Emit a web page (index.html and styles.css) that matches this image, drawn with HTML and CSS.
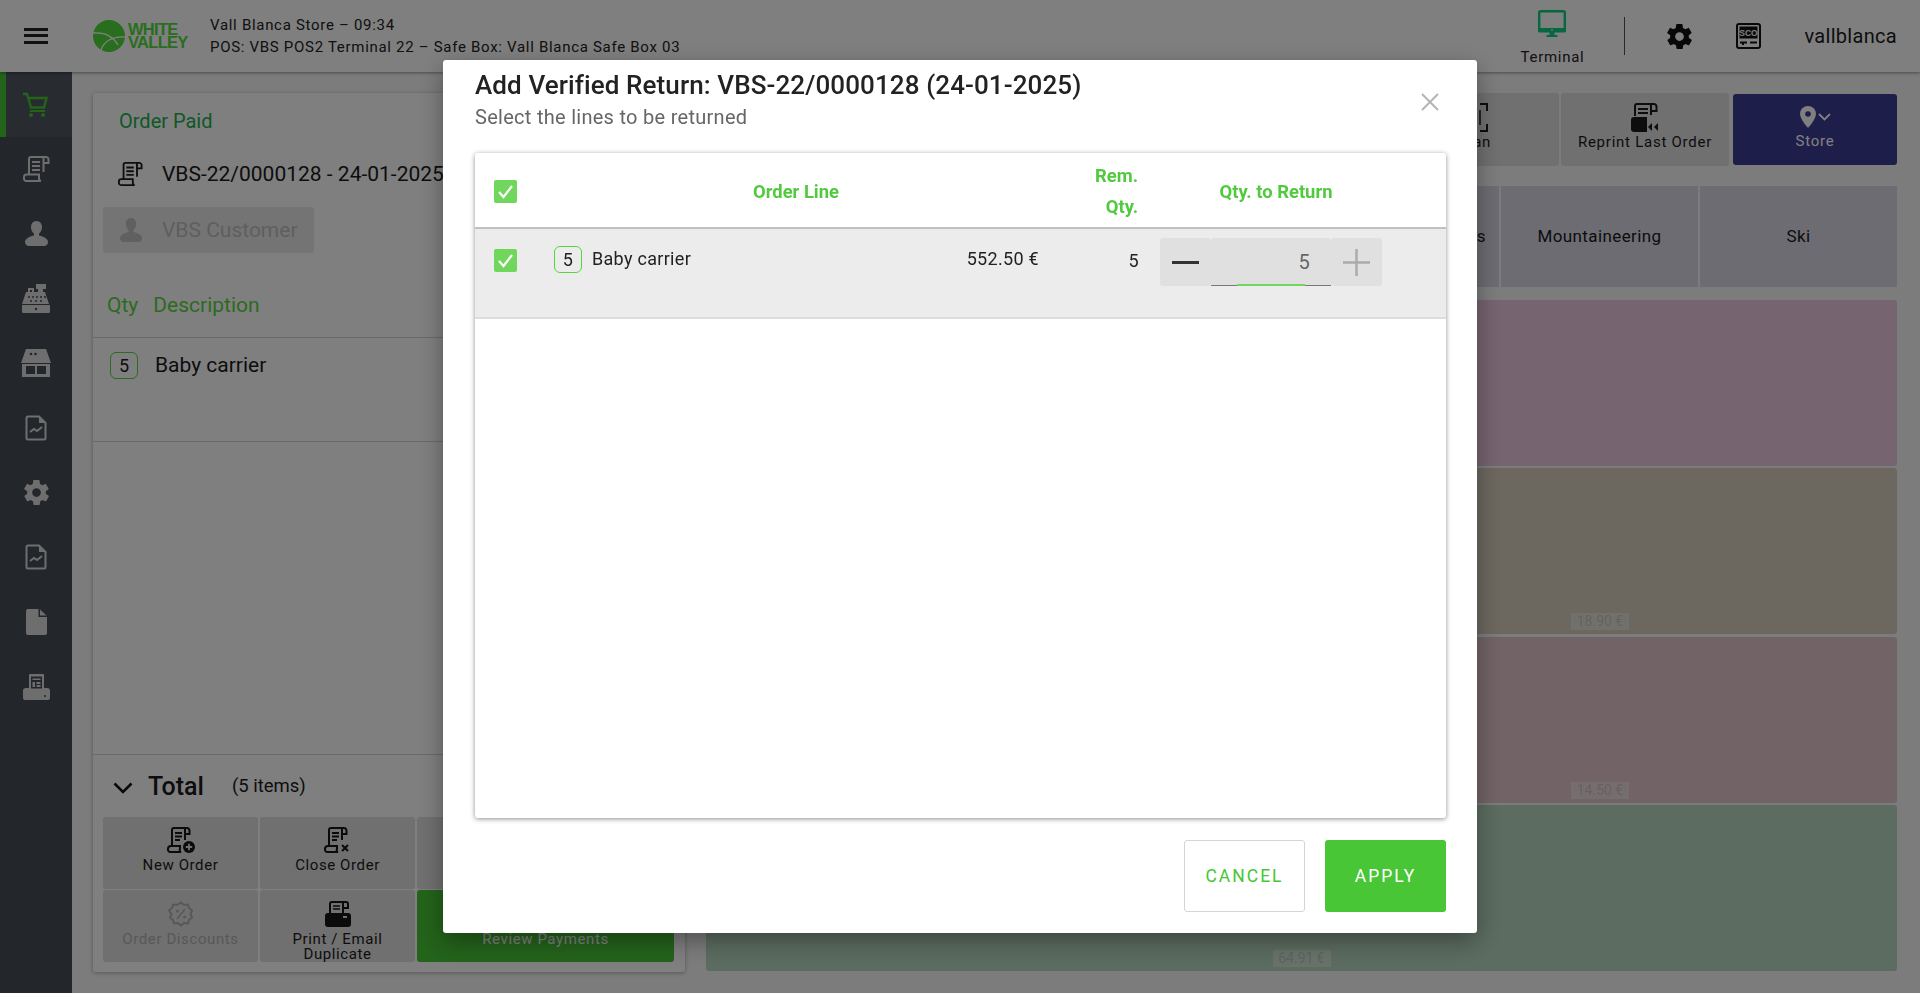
FILE: index.html
```html
<!DOCTYPE html>
<html lang="en">
<head>
<meta charset="utf-8">
<title>POS</title>
<link rel="stylesheet" href="styles.css">
</head>
<body>
<div class="app">
  <header class="topbar">
    <button class="burger"><span></span><span></span><span></span></button>
    <div class="logo">
      <svg width="32" height="32" viewBox="0 0 32 32"><circle cx="16" cy="16" r="16" fill="#52dc3c"/><path d="M0 13c11-1 20 3 25 12M8 30c3-9 12-14 24-13" fill="none" stroke="#fff" stroke-width="1.300"/></svg>
      <div class="logo-text">WHITE<br>VALLEY</div>
    </div>
    <div class="store-info">
      <div>Vall Blanca Store – 09:34</div>
      <div>POS: VBS POS2 Terminal 22 – Safe Box: Vall Blanca Safe Box 03</div>
    </div>
    <div class="top-right">
      <div class="terminal">
        <svg width="28" height="27" viewBox="0 0 28 27"><rect x="1.200" y="1.200" width="25.600" height="19.600" rx="1.500" fill="none" stroke="#0bd080" stroke-width="2.400"/><path d="M0 18h28v3a1.500 1.500 0 0 1-1.500 1.500h-25A1.500 1.500 0 0 1 0 21zM11.500 22.500h5V25h3v2h-11v-2h3z" fill="#0bd080"/><path d="M13 19.500h2v1h-2z" fill="#fff"/></svg>
        <span>Terminal</span>
      </div>
      <div class="vsep"></div>
      <svg class="gear" width="25" height="25" viewBox="2 2 20 20"><path fill="#111" d="M19.400 13c0-.3.1-.6.1-1s0-.7-.1-1l2.100-1.600c.2-.2.2-.4.1-.6l-2-3.500c-.1-.2-.4-.3-.6-.2l-2.500 1c-.5-.4-1.100-.7-1.700-1l-.4-2.700c0-.2-.2-.4-.5-.4h-4c-.3 0-.5.2-.5.4l-.4 2.700c-.6.2-1.100.6-1.700 1l-2.500-1c-.2-.1-.5 0-.6.2l-2 3.500c-.1.2-.1.5.1.6L4.600 11c0 .3-.1.6-.1 1s0 .7.1 1l-2.100 1.600c-.2.2-.2.4-.1.6l2 3.500c.1.2.4.3.6.2l2.500-1c.5.4 1.100.7 1.700 1l.4 2.700c0 .2.2.4.5.4h4c.3 0 .5-.2.5-.4l.4-2.700c.6-.2 1.100-.6 1.700-1l2.500 1c.2.1.5 0 .6-.2l2-3.500c.1-.2.1-.5-.1-.6zM12 15.500a3.500 3.500 0 1 1 0-7 3.500 3.500 0 0 1 0 7z"/></svg>
      <svg class="sco" width="25" height="26" viewBox="0 0 25 26"><rect x="1" y="1" width="23" height="24" rx="2" fill="none" stroke="#111" stroke-width="2"/><rect x="3.500" y="3.500" width="18" height="12" fill="#111"/><text class="sco-text" x="12.500" y="13" text-anchor="middle">SCO</text><path d="M4 18.500h7v2H8v1.500H6v-1.500H4zM14 18.500h7v2h-7z" fill="#111"/></svg>
      <div class="username">vallblanca</div>
    </div>
  </header>
  <div class="body-row">
    <nav class="sidebar">
      <div class="nav-item active">
        <svg width="26" height="25" viewBox="0 0 26 25"><path d="M1 2h4l4 13.500h13l2.500-9.500H6" fill="none" stroke="#48c635" stroke-width="2.400"/><path d="M8 19h15" stroke="#48c635" stroke-width="2"/><circle cx="9" cy="23" r="2" fill="#48c635"/><circle cx="21" cy="23" r="2" fill="#48c635"/></svg>
      </div>
      <div class="nav-item"><svg width="27" height="26" viewBox="0 0 27 26"><path d="M6 18V3a2 2 0 0 1 2-2h15a2.500 2.500 0 0 1 2.500 2.500V7H21M20.500 1v15M1 21a2.500 2.500 0 0 1 2.500-2.500H16V22a2.500 2.500 0 0 0 2 3H3.500A2.500 2.500 0 0 1 1 22z" fill="none" stroke="#dcdcdc" stroke-width="2"/><path d="M9 6h8M9 10h8M9 14h8" stroke="#dcdcdc" stroke-width="2"/></svg></div>
      <div class="nav-item"><svg width="23" height="25" viewBox="0 0 23 25"><path fill="#dcdcdc" d="M11.500 0c3.500 0 5.500 2.800 5.500 6.300 0 2.700-1.500 5-3 6.500v1.700c3 .8 9 2.500 9 6.500 0 2.500-2 4-4 4H4c-2 0-4-1.500-4-4 0-4 6-5.700 9-6.500v-1.700C7.500 11.300 6 9 6 6.300 6 2.800 8 0 11.500 0z"/></svg></div>
      <div class="nav-item"><svg width="30" height="30" viewBox="0 0 30 30"><path fill="#dcdcdc" d="M5 9h2V5h6v4h4V6h-2V1h10v5h-3v3h2l4 12H1zM1 22h28v6.500a1.500 1.500 0 0 1-1.500 1.500h-25A1.500 1.500 0 0 1 1 28.500z"/><g fill="#474f57"><rect x="9" y="7" width="2" height="2"/><circle cx="8" cy="14" r="1"/><circle cx="12" cy="14" r="1"/><circle cx="16" cy="14" r="1"/><circle cx="20" cy="14" r="1"/><circle cx="24" cy="14" r="1"/><circle cx="10" cy="18" r="1"/><circle cx="15" cy="18" r="1"/><circle cx="20" cy="18" r="1"/><circle cx="15" cy="26" r="1.200"/></g></svg></div>
      <div class="nav-item"><svg width="30" height="28" viewBox="0 0 30 28"><path fill="#dcdcdc" d="M5 0h20l5 14H0z"/><path fill="#dcdcdc" d="M1 15h28v13H1z"/><rect x="5" y="17" width="20" height="8" fill="#474f57"/><rect x="14" y="17" width="2" height="11" fill="#dcdcdc"/><circle cx="10" cy="5" r="1.300" fill="#474f57"/><circle cx="14.500" cy="5" r="1.300" fill="#474f57"/></svg></div>
      <div class="nav-item"><svg width="22" height="26" viewBox="0 0 22 26"><path d="M3 1.500h11l6.500 6.500v15a1.500 1.500 0 0 1-1.500 1.500H3A1.500 1.500 0 0 1 1.500 23V3A1.500 1.500 0 0 1 3 1.500z" fill="none" stroke="#dcdcdc" stroke-width="2"/><path d="M5 17l4-3 3 2 5-4" fill="none" stroke="#dcdcdc" stroke-width="2"/><path d="M14 2v6h6z" fill="#dcdcdc"/></svg></div>
      <div class="nav-item"><svg width="25" height="25" viewBox="2 2 20 20"><path fill="#dcdcdc" d="M19.400 13c0-.3.1-.6.1-1s0-.7-.1-1l2.100-1.600c.2-.2.2-.4.1-.6l-2-3.500c-.1-.2-.4-.3-.6-.2l-2.500 1c-.5-.4-1.100-.7-1.700-1l-.4-2.700c0-.2-.2-.4-.5-.4h-4c-.3 0-.5.2-.5.4l-.4 2.700c-.6.2-1.100.6-1.700 1l-2.500-1c-.2-.1-.5 0-.6.2l-2 3.500c-.1.2-.1.5.1.6L4.600 11c0 .3-.1.6-.1 1s0 .7.1 1l-2.100 1.600c-.2.2-.2.4-.1.6l2 3.500c.1.2.4.3.6.2l2.500-1c.5.4 1.100.7 1.700 1l.4 2.700c0 .2.2.4.5.4h4c.3 0 .5-.2.5-.4l.4-2.700c.6-.2 1.100-.6 1.700-1l2.500 1c.2.1.5 0 .6-.2l2-3.500c.1-.2.1-.5-.1-.6zM12 15.500a3.500 3.500 0 1 1 0-7 3.500 3.500 0 0 1 0 7z"/></svg></div>
      <div class="nav-item"><svg width="22" height="26" viewBox="0 0 22 26"><path d="M3 1.500h11l6.500 6.500v15a1.500 1.500 0 0 1-1.500 1.500H3A1.500 1.500 0 0 1 1.500 23V3A1.500 1.500 0 0 1 3 1.500z" fill="none" stroke="#dcdcdc" stroke-width="2"/><path d="M5 17l4-3 3 2 5-4" fill="none" stroke="#dcdcdc" stroke-width="2"/><path d="M14 2v6h6z" fill="#dcdcdc"/></svg></div>
      <div class="nav-item"><svg width="22" height="26" viewBox="0 0 22 26"><path fill="#dcdcdc" d="M3 0h10.500v8H22v16a2 2 0 0 1-2 2H3a2 2 0 0 1-2-2V2a2 2 0 0 1 2-2zM15 .5L21.500 6.500H15z"/></svg></div>
      <div class="nav-item"><svg width="27" height="26" viewBox="0 0 27 26"><path fill="#dcdcdc" d="M6 1a1 1 0 0 1 1-1h13a1 1 0 0 1 1 1v13h3a3 3 0 0 1 3 3v7a2 2 0 0 1-2 2H2a2 2 0 0 1-2-2v-7a3 3 0 0 1 3-3h3z"/><path fill="#474f57" d="M8 2.500h11v12H8z"/><path fill="#dcdcdc" d="M9.500 4.500h8V6h-8zM9.500 8h2.500v5H9.500zM13.500 8h4v2h-4zM13.500 11h4v2h-4z"/><circle cx="22" cy="22" r="1" fill="#474f57"/></svg></div>
    </nav>
    <main class="workspace">
      <section class="order-panel">
        <div class="order-status">Order Paid</div>
        <div class="order-doc">
          <svg width="25" height="26" viewBox="0 0 27 26"><path d="M6 18V3a2 2 0 0 1 2-2h15a2.500 2.500 0 0 1 2.500 2.500V7H21M20.500 1v15M1 21a2.500 2.500 0 0 1 2.500-2.500H16V22a2.500 2.500 0 0 0 2 3H3.500A2.500 2.500 0 0 1 1 22z" fill="none" stroke="#1d1d1d" stroke-width="2"/><path d="M9 6h8M9 10h8M9 14h8" stroke="#1d1d1d" stroke-width="2"/></svg>
          <span>VBS-22/0000128 - 24-01-2025</span>
        </div>
        <div class="customer">
          <svg width="22" height="26" viewBox="0 0 23 25"><path fill="#c0c0c0" d="M11.500 0c3.500 0 5.500 2.800 5.500 6.300 0 2.700-1.500 5-3 6.500v1.700c3 .8 9 2.500 9 6.500 0 2.500-2 4-4 4H4c-2 0-4-1.500-4-4 0-4 6-5.700 9-6.500v-1.700C7.500 11.300 6 9 6 6.300 6 2.800 8 0 11.500 0z"/></svg>
          <span>VBS Customer</span>
        </div>
        <div class="line-head"><span>Qty</span><span>Description</span></div>
        <div class="line-row"><span class="qty-badge">5</span><span class="line-name">Baby carrier</span></div>
        <div class="panel-spacer"></div>
        <div class="total-row">
          <svg width="20" height="12" viewBox="0 0 20 12"><path d="M1.500 1.500L10 10l8.500-8.500" fill="none" stroke="#111" stroke-width="2.600"/></svg>
          <span class="total-label">Total</span>
          <span class="total-items">(5 items)</span>
        </div>
        <div class="actions">
          <div class="act">
            <svg width="28" height="26" viewBox="0 0 28 26"><path d="M5 18V3a2 2 0 0 1 2-2h13a2.500 2.500 0 0 1 2.500 2.500V7H19M18 1v12M1 22a3 3 0 0 1 3-3h9v3a2 2 0 0 0 1 3H3.500A2.500 2.500 0 0 1 1 22z" fill="none" stroke="#151515" stroke-width="2"/><path d="M8 6h7M8 9.500h7M8 13h5" stroke="#151515" stroke-width="1.800"/><circle cx="22" cy="20" r="6" fill="#151515"/><path d="M18.800 20h6.400M22 16.800v6.400" stroke="#e0e0e0" stroke-width="1.800"/></svg>
            <span>New Order</span>
          </div>
          <div class="act">
            <svg width="28" height="26" viewBox="0 0 28 26"><path d="M5 18V3a2 2 0 0 1 2-2h13a2.500 2.500 0 0 1 2.500 2.500V7H19M18 1v12M1 22a3 3 0 0 1 3-3h9v3a2 2 0 0 0 1 3H3.500A2.500 2.500 0 0 1 1 22z" fill="none" stroke="#151515" stroke-width="2"/><path d="M8 6h7M8 9.500h7M8 13h5" stroke="#151515" stroke-width="1.800"/><path d="M18 18l6 6M24 18l-6 6" stroke="#151515" stroke-width="2"/></svg>
            <span>Close Order</span>
          </div>
          <div class="act"></div>
          <div class="act lower disabled">
            <svg width="26" height="26" viewBox="0 0 26 26"><path d="M13 1.500l3 2.500 4-.5 1 3.500 3 2.500-1.500 3.500 1.500 3.500-3 2.500-1 3.500-4-.5-3 2.500-3-2.500-4 .5-1-3.500-3-2.500 1.500-3.500L1 9.500 4 7l1-3.500 4 .5z" fill="none" stroke="#b0b0b0" stroke-width="2"/><path d="M9 18l8-10" stroke="#b0b0b0" stroke-width="1.600"/><circle cx="9.500" cy="10" r="1.500" fill="#b0b0b0"/><circle cx="16.500" cy="16" r="1.500" fill="#b0b0b0"/></svg>
            <span>Order Discounts</span>
          </div>
          <div class="act lower">
            <svg width="26" height="26" viewBox="0 0 26 26"><path d="M5 12V3a2 2 0 0 1 2-2h14a2 2 0 0 1 2 2v4h-4M18 1v11" fill="none" stroke="#151515" stroke-width="2"/><path d="M8 5h7M8 8h7" stroke="#151515" stroke-width="1.600"/><path fill="#151515" d="M3 12h20a3 3 0 0 1 3 3v8a3 3 0 0 1-3 3H3a3 3 0 0 1-3-3v-8a3 3 0 0 1 3-3z"/><rect x="18" y="15" width="4" height="2" fill="#e0e0e0"/></svg>
            <span>Print / Email<br>Duplicate</span>
          </div>
          <div class="act review"><span>Review Payments</span></div>
        </div>
      </section>
      <section class="catalog">
        <div class="tool-row">
          <div class="tool"></div>
          <div class="tool">
            <svg width="30" height="29" viewBox="0 0 30 29"><path d="M1 8V1h7M22 1h7v7M29 21v7h-7M8 28H1v-7" fill="none" stroke="#1b1b1b" stroke-width="2"/><path d="M6 7v15M10 7v15M14 7v15M18 7v15M22 7v15" stroke="#1b1b1b" stroke-width="1.500"/></svg>
            <span>Scan</span>
          </div>
          <div class="tool">
            <svg width="28" height="29" viewBox="0 0 28 29"><path d="M4 13V3a2 2 0 0 1 2-2h17a2.500 2.500 0 0 1 2.500 2.500V8H21M20 1v11" fill="none" stroke="#1b1b1b" stroke-width="2"/><path d="M7 6h10M7 10h10" stroke="#1b1b1b" stroke-width="1.800"/><path fill="#1b1b1b" d="M3 14h13v15H3a3 3 0 0 1-3-3V17a3 3 0 0 1 3-3z"/><path fill="#1b1b1b" d="M21 20l-4 4 4 4zM27 20l-4 4 4 4z"/></svg>
            <span>Reprint Last Order</span>
          </div>
          <div class="tool store">
            <svg width="31" height="22" viewBox="0 0 31 22"><path fill="#fff" d="M8 0a8 8 0 0 1 8 8c0 5-8 14-8 14S0 13 0 8a8 8 0 0 1 8-8z"/><circle cx="8" cy="8" r="2.800" fill="#3c3c96"/><path d="M19 8l5.500 5.500L30 8" fill="none" stroke="#fff" stroke-width="1.800"/></svg>
            <span>Store</span>
          </div>
        </div>
        <div class="cat-row">
          <div class="cat cat-first">Accessories</div>
          <div class="cat">Mountaineering</div>
          <div class="cat">Ski</div>
        </div>
        <div class="products">
          <div class="product purple"></div>
          <div class="product purple"></div>
          <div class="product olive"></div>
          <div class="product olive"><span class="price">18.90 €</span></div>
          <div class="product rose"></div>
          <div class="product rose"><span class="price">14.50 €</span></div>
          <div class="product sage full"><span class="price">64.91 €</span></div>
        </div>
      </section>
    </main>
  </div>
</div>
<div class="overlay"></div>
<div class="modal">
  <div class="modal-head">
    <div>
      <h1>Add Verified Return: VBS-22/0000128 (24-01-2025)</h1>
      <p>Select the lines to be returned</p>
    </div>
    <svg class="close" width="18" height="18" viewBox="0 0 18 18"><path d="M1 1l16 16M17 1L1 17" stroke="#b5b5b5" stroke-width="2"/></svg>
  </div>
  <div class="table-card">
    <div class="t-row t-head">
      <span class="check"><svg width="17" height="15" viewBox="0 0 17 15"><path d="M2 8l4.500 5L15 2" fill="none" stroke="#fff" stroke-width="2.200"/></svg></span>
      <span class="th-line">Order Line</span>
      <span class="th-rem">Rem.<br>Qty.</span>
      <span class="th-ret">Qty. to Return</span>
    </div>
    <div class="t-row t-line">
      <span class="check"><svg width="17" height="15" viewBox="0 0 17 15"><path d="M2 8l4.500 5L15 2" fill="none" stroke="#fff" stroke-width="2.200"/></svg></span>
      <span class="qty-badge small">5</span>
      <span class="t-name">Baby carrier</span>
      <span class="t-price">552.50 €</span>
      <span class="t-rem">5</span>
      <div class="stepper">
        <span class="step"><svg width="27" height="3" viewBox="0 0 27 3"><rect width="27" height="3" fill="#333"/></svg></span>
        <span class="step-value">5</span>
        <span class="step"><svg width="27" height="27" viewBox="0 0 27 27"><path d="M0 13.500h27M13.500 0v27" stroke="#ababab" stroke-width="2.500"/></svg></span>
      </div>
    </div>
  </div>
  <div class="modal-foot">
    <button class="btn cancel">CANCEL</button>
    <button class="btn apply">APPLY</button>
  </div>
</div>
</body>
</html>
```
FILE: styles.css
```css
* { box-sizing: border-box; }
html, body { margin: 0; height: 100%; overflow: hidden; }
body { font-family: Roboto, "Liberation Sans", sans-serif; color: #1a1a1a; background: #f8f8f8; }
.app { display: flex; flex-direction: column; height: 993px; width: 1920px; background: #f8f8f8; }

.topbar { height: 72px; flex: none; display: flex; align-items: center; background: #fff; box-shadow: 0 1px 3px rgba(0,0,0,.4); position: relative; z-index: 2; }
.burger { width: 72px; height: 72px; background: none; border: 0; display: flex; flex-direction: column; align-items: center; justify-content: center; gap: 3.500px; padding: 0 0 1px; flex: none; }
.burger span { width: 24px; height: 3px; background: #222; }
.logo { display: flex; align-items: center; margin-left: 21px; width: 117px; gap: 3px; flex: none; }
.logo-text { font-family: "Liberation Sans", sans-serif; font-weight: 700; font-size: 16.500px; line-height: 13.500px; letter-spacing: -.7px; color: #52dc3c; }
.store-info { font-size: 15px; letter-spacing: .7px; line-height: 22px; color: #222; white-space: nowrap; }
.top-right { margin-left: auto; display: flex; align-items: center; height: 72px; }
.terminal { display: flex; flex-direction: column; align-items: center; align-self: flex-start; font-size: 15px; letter-spacing: .7px; line-height: 18px; width: 64px; margin-right: 40px; color: #222; gap: 11px; padding-top: 10px; }
.vsep { width: 1px; height: 38px; background: #555; margin-right: 42px; }
.gear { margin-right: 44px; }
.sco { margin-right: 43px; }
.sco-text { font-family: "Liberation Sans", sans-serif; font-size: 8.500px; font-weight: 700; fill: #fff; }
.username { font-size: 20px; letter-spacing: .3px; margin-right: 23px; }

.body-row { flex: 1; display: flex; min-height: 0; }
.sidebar { width: 72px; flex: none; background: #474f58; display: flex; flex-direction: column; }
.nav-item { height: 64.700px; display: flex; align-items: center; justify-content: center; }
.nav-item.active { background: #505963; border-left: 6px solid #48c635; padding-right: 9px; }

.workspace { flex: 1; display: flex; padding: 21px 23px 21px 21px; gap: 21px; min-width: 0; }

.order-panel { width: 592px; flex: none; background: #fff; border-radius: 3px; box-shadow: 0 1px 4px rgba(0,0,0,.3); display: flex; flex-direction: column; }
.order-status { font-size: 20px; line-height: 24px; color: #20b050; padding: 16px 0 0 26px; height: 54px; flex: none; }
.order-doc { display: flex; align-items: flex-start; gap: 19px; font-size: 21px; line-height: 26px; padding: 14px 0 0 25px; height: 60px; white-space: nowrap; flex: none; }
.customer { display: flex; align-items: center; gap: 20px; margin-left: 10px; width: 211px; height: 46px; background: #e8e8e8; border-radius: 3px; padding-left: 17px; font-size: 21px; color: #bebebe; flex: none; }
.line-head { display: flex; gap: 15px; font-size: 21px; line-height: 24px; color: #58d640; padding: 40px 0 0 14px; height: 85px; border-bottom: 1px solid #d4d4d4; flex: none; }
.line-row { display: flex; align-items: flex-start; gap: 17px; height: 104px; padding: 14px 0 0 17px; border-bottom: 1px solid #d4d4d4; flex: none; }
.qty-badge { display: flex; align-items: center; justify-content: center; width: 28px; height: 27px; border: 1px solid #58d640; border-radius: 6px; font-size: 18px; flex: none; }
.line-name { font-size: 21px; line-height: 26px; }
.panel-spacer { flex: 1; border-bottom: 1px solid #d4d4d4; }
.total-row { display: flex; align-items: center; height: 62px; padding-left: 20px; flex: none; }
.total-row svg { margin-top: 4px; }
.total-label { font-size: 25px; font-weight: 500; margin-left: 15px; }
.total-items { font-size: 18.500px; margin-left: 28px; }
.actions { display: grid; grid-template-columns: 155px 155px 1fr; grid-auto-rows: 72px; gap: 1px 2px; padding: 0 11px 10px 10px; flex: none; }
.act { background: #e0e0e0; border-radius: 3px; display: flex; flex-direction: column; align-items: center; font-size: 15px; letter-spacing: .6px; line-height: 14.500px; padding-top: 10px; gap: 5px; text-align: center; }
.act.lower { padding-top: 11px; }
.act.disabled { color: #b0b0b0; }
.act.review { background: #48c635; color: #fff; padding-top: 42px; }

.catalog { flex: 1; display: flex; flex-direction: column; min-width: 0; padding-bottom: 1px; }
.tool-row { display: grid; grid-template-columns: 1fr 172px 168px 166px; gap: 2px; height: 73px; flex: none; }
.tool { background: #e0e0e0; border-radius: 3px; display: flex; flex-direction: column; align-items: center; font-size: 15px; letter-spacing: .75px; line-height: 18px; padding-top: 10px; gap: 1px; }
.tool.store { background: #3c3c96; color: #fff; margin: 1px 0 1px 2px; padding-top: 12px; gap: 4px; }
.cat-row { display: grid; grid-template-columns: 1fr 197px 197px; gap: 2px; height: 101px; margin-top: 20px; flex: none; }
.cat { background: #d8d8e4; text-align: center; padding-top: 40px; font-size: 17px; line-height: 20px; letter-spacing: .4px; }
.cat-first { text-align: right; padding-right: 13px; }
.products { flex: 1; display: grid; grid-template-columns: 1fr 1fr; grid-template-rows: repeat(4, 1fr); gap: 2.500px 3px; margin-top: 13px; min-height: 0; }
.product { border-radius: 3px; display: flex; align-items: flex-end; justify-content: center; padding-bottom: 4px; }
.product.purple { background: #ecc8e0; }
.product.olive { background: #d8d0c0; }
.product.rose { background: #e4c8cc; }
.product.sage { background: #b8d8c0; }
.product.full { grid-column: 1 / -1; }
.price { width: 58px; text-align: center; font-size: 14px; line-height: 17px; background: rgba(255,255,255,.35); color: rgba(0,0,0,.14); }

.overlay { position: fixed; inset: 0; background: rgba(0,0,0,.5); z-index: 5; }
.modal { position: fixed; left: 443px; top: 60px; width: 1034px; height: 873px; background: #fff; border-radius: 3px; z-index: 6; box-shadow: 0 8px 24px rgba(0,0,0,.35); padding: 0 31px 0 32px; display: flex; flex-direction: column; }
.modal-head { display: flex; justify-content: space-between; height: 93px; flex: none; }
.modal-head h1 { margin: 10px 0 0; font-size: 26px; font-weight: 500; line-height: 30px; color: #222; letter-spacing: .1px; }
.modal-head p { margin: 5px 0 0; font-size: 20px; line-height: 24px; color: #666; letter-spacing: .28px; }
.close { margin: 33px 7px 0 0; }
.table-card { height: 665px; flex: none; border-radius: 3px; box-shadow: 0 1px 5px rgba(0,0,0,.45); background: #fff; }
.t-row { display: flex; }
.t-head { height: 76px; border-bottom: 2px solid #c0c0c0; align-items: center; font-size: 18.400px; font-weight: 700; color: #52c93f; }
.t-head span:not(.check) { padding-top: 2px; }
.t-line { height: 90px; background: #ececec; border-bottom: 2px solid #ddd; align-items: flex-start; font-size: 18px; line-height: 24px; letter-spacing: .3px; color: #222; }
.check { width: 23px; height: 23px; background: #70d65c; border-radius: 2px; display: flex; align-items: center; justify-content: center; margin-left: 19px; flex: none; }
.t-head .check { margin-top: 2px; }
.t-line .check { margin-top: 20px; }
.th-line { width: 514px; text-align: center; margin-left: 22px; }
.th-rem { width: 85px; text-align: right; line-height: 31px; }
.th-ret { width: 276px; text-align: center; }
.qty-badge.small { margin: 17px 0 0 37px; }
.t-name { margin: 18px 0 0 10px; width: 300px; }
.t-price { margin-top: 18px; width: 147px; text-align: right; white-space: nowrap; }
.t-rem { width: 100px; text-align: right; margin-top: 20px; }
.stepper { display: flex; margin: 9px 0 0 21px; height: 48px; }
.step { width: 51px; background: #e0e0e0; border-radius: 3px; display: flex; align-items: center; justify-content: center; }
.step-value { width: 120px; background: #e0e0e0; border-bottom: 1px solid #777; border-radius: 3px 3px 0 0; display: flex; align-items: center; justify-content: flex-end; padding: 1px 21px 0 0; font-size: 20px; color: #666; position: relative; }
.step-value::after { content: ""; position: absolute; left: 26px; right: 26px; bottom: -1px; height: 2px; background: #70d65c; }
.modal-foot { display: flex; justify-content: flex-end; gap: 20px; margin-top: 22px; }
.btn { height: 72px; border-radius: 3px; font-family: Roboto, sans-serif; font-size: 17.500px; letter-spacing: 2px; }
.btn.cancel { width: 121px; background: #fff; border: 1px solid #d4d4d4; color: #48c635; }
.btn.apply { width: 121px; background: #48c635; border: 0; color: #fff; }
```
